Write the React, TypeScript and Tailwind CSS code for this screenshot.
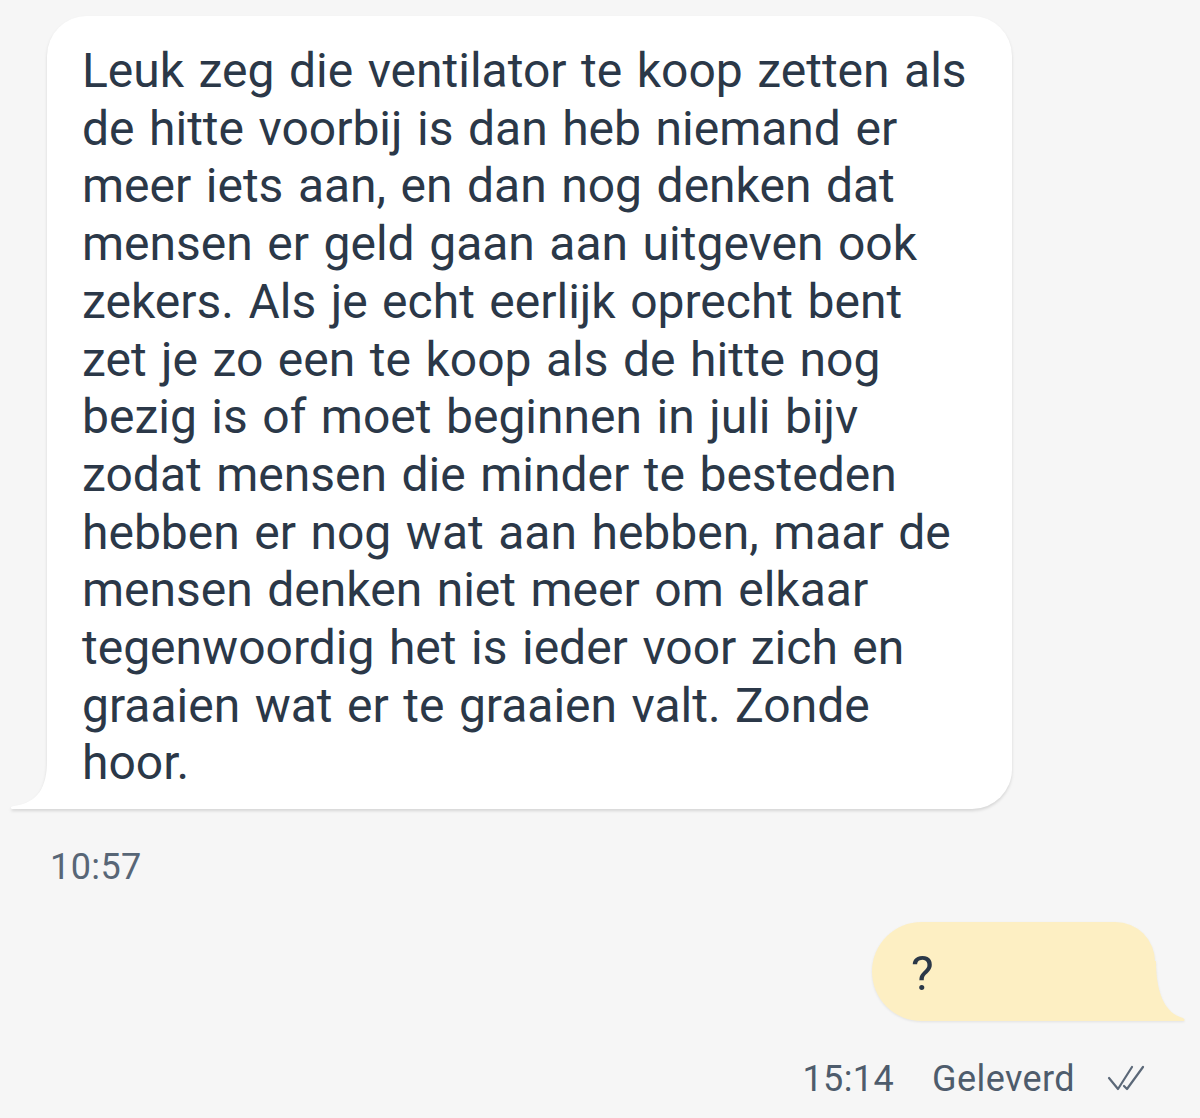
import React from "react";

const lines = [
  "Leuk zeg die ventilator te koop zetten als",
  "de hitte voorbij is dan heb niemand er",
  "meer iets aan, en dan nog denken dat",
  "mensen er geld gaan aan uitgeven ook",
  "zekers. Als je echt eerlijk oprecht bent",
  "zet je zo een te koop als de hitte nog",
  "bezig is of moet beginnen in juli bijv",
  "zodat mensen die minder te besteden",
  "hebben er nog wat aan hebben, maar de",
  "mensen denken niet meer om elkaar",
  "tegenwoordig het is ieder voor zich en",
  "graaien wat er te graaien valt. Zonde",
  "hoor.",
];

const DoubleCheck = () => (
  <svg width="40" height="28" viewBox="0 0 40 28" fill="none" stroke="#5b6878" strokeWidth="2.2" strokeLinecap="round" strokeLinejoin="round">
    <polyline points="2,14 11,25 25,3" />
    <polyline points="17,22 20,25 36,3" />
  </svg>
);

export default function App() {
  return (
    <div
      className="w-full h-[1118px] bg-[#f6f6f6] overflow-hidden"
      style={{ fontFamily: "Roboto, 'Noto Sans', sans-serif" }}
    >
      <div className="pt-[16px] pl-[47px]">
        <div className="relative w-[965px] drop-shadow-[0_2px_1.5px_rgba(0,0,0,0.13)]">
          <div className="bg-white rounded-[40px] rounded-bl-none pl-[35px] pt-[26px] pb-[17px] text-[#2b3848] text-[48px] leading-[57.7px] [word-spacing:2.6px]">
            {lines.map((l, i) => (
              <div key={i} className="whitespace-nowrap">
                {l}
              </div>
            ))}
          </div>
          <svg className="absolute left-[-37px] bottom-0" width="38" height="50" viewBox="0 0 38 50">
            <path d="M38,0 L37,2 C37,28 28,44 4,47 C1,47.5 0,49 2,50 L38,50 Z" fill="#ffffff" />
          </svg>
        </div>
      </div>

      <div className="pl-[50px] mt-[38px] text-[36px] leading-[40px] tracking-[0.4px] text-[#586676]">10:57</div>

      <div className="flex justify-end pr-[45px] mt-[35px]">
        <div className="relative drop-shadow-[0_1.5px_1px_rgba(0,0,0,0.08)]">
          <div className="w-[283px] h-[99px] bg-[#fdefc3] rounded-l-[50px] rounded-tr-[40px] flex items-center pl-[39px] pt-[4px] text-[48px] leading-[56px] text-[#2b3848]">
            ?
          </div>
          <svg className="absolute right-[-30px] bottom-0" width="31" height="60" viewBox="0 0 31 60">
            <path d="M0,0 L0,0 C1,0 2,0 2,0 C2,30 10,52 29,57 C31,58 31,60 29,60 L0,60 Z" fill="#fdefc3" />
          </svg>
        </div>
      </div>

      <div className="flex justify-end items-center pr-[53px] mt-[38px] text-[36px] leading-[40px] tracking-[0.4px] text-[#4e5c6c]">
        <span>15:14</span>
        <span className="ml-[38px]">Geleverd</span>
        <span className="ml-[32px] mt-[-2px]">
          <DoubleCheck />
        </span>
      </div>
    </div>
  );
}
